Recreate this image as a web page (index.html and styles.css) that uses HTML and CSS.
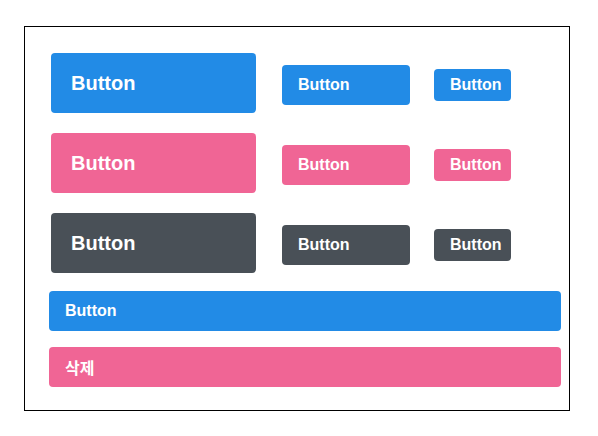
FILE: index.html
```html
<!DOCTYPE html>
<html lang="ko">
<head>
<meta charset="utf-8">
<link rel="stylesheet" href="styles.css">
</head>
<body>
<div class="frame">
  <div class="row">
    <button class="btn lg blue">Button</button>
    <button class="btn md blue">Button</button>
    <button class="btn sm blue">Button</button>
  </div>
  <div class="row">
    <button class="btn lg pink">Button</button>
    <button class="btn md pink">Button</button>
    <button class="btn sm pink">Button</button>
  </div>
  <div class="row">
    <button class="btn lg gray">Button</button>
    <button class="btn md gray">Button</button>
    <button class="btn sm gray">Button</button>
  </div>
  <button class="btn full blue first">Button</button>
  <button class="btn full pink">삭제</button>
</div>
</body>
</html>
```
FILE: styles.css
```css
html, body {
  margin: 0;
  padding: 0;
  background: #fff;
}
body {
  padding: 26px 0 0 24px;
}
.frame {
  box-sizing: border-box;
  width: 546px;
  height: 385px;
  border: 1px solid #000;
  padding: 26px 0 0 24px;
  display: flex;
  flex-direction: column;
  align-items: flex-start;
}
.row {
  display: flex;
  align-items: baseline;
  padding-left: 2px;
  margin-bottom: 20px;
}
.row:nth-child(3) {
  margin-bottom: 18px;
}
.btn {
  box-sizing: border-box;
  border: none;
  margin: 0;
  border-radius: 4px;
  color: #fff;
  font-family: "Liberation Sans", Arial, "Noto Sans CJK KR", sans-serif;
  font-weight: bold;
  display: flex;
  align-items: center;
  text-align: left;
  cursor: pointer;
}
.blue { background: #228be6; }
.pink { background: #f06595; }
.gray { background: #495057; }
.lg {
  width: 205px;
  height: 60px;
  padding: 0 20px;
  font-size: 20px;
  margin-right: 26px;
}
.md {
  width: 128px;
  height: 40px;
  padding: 0 16px;
  font-size: 16px;
  margin-right: 24px;
}
.sm {
  width: 77px;
  height: 32px;
  padding: 0 16px;
  font-size: 16px;
}
.full {
  width: 512px;
  height: 40px;
  padding: 0 16px;
  font-size: 16px;
}
.full.first {
  margin-bottom: 16px;
}
```
